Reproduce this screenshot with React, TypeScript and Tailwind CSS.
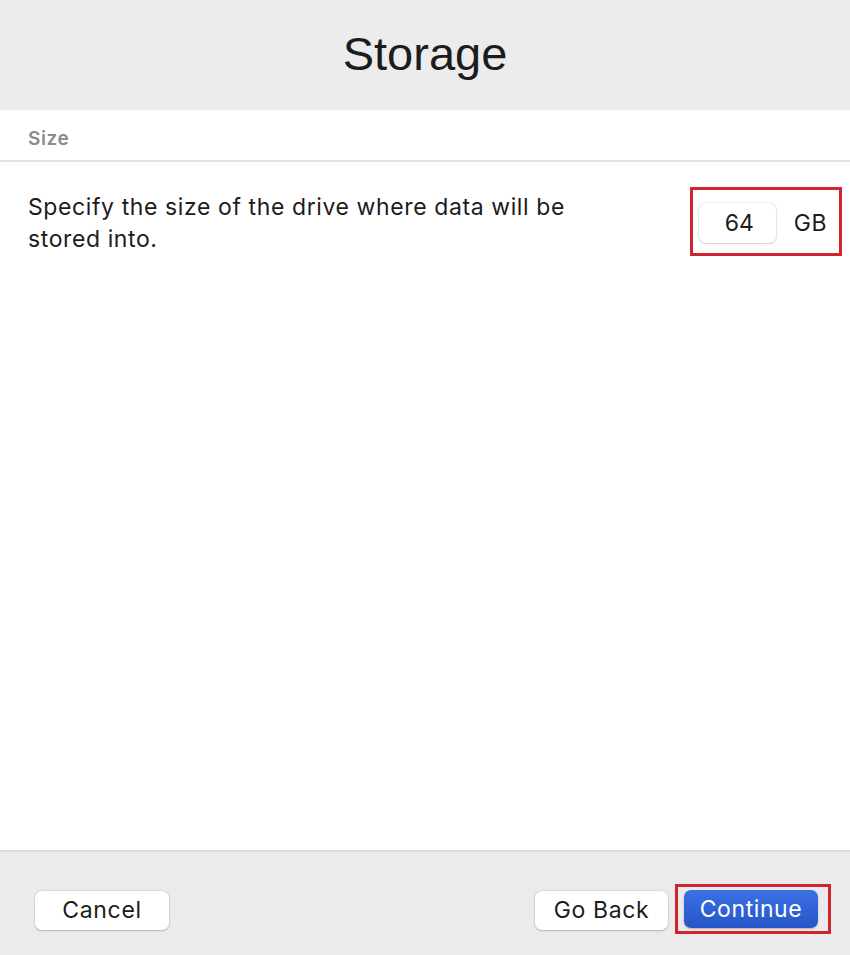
export default function App() {
  return (
    <main
      className="flex h-[955px] w-full flex-col bg-white text-[#1c1c1c]"
      style={{ fontFamily: 'Inter, "Liberation Sans", Arial, sans-serif' }}
    >
      <header className="flex h-[110px] items-center justify-center bg-[#ececec] pb-[4px]">
        <h1
          className="text-[47px] leading-none text-[#1c1c1c]"
          style={{ fontFamily: '"Liberation Sans", Arial, sans-serif' }}
        >
          Storage
        </h1>
      </header>

      <section className="flex flex-1 flex-col">
        <div className="flex h-[52px] items-center border-b-2 border-[#e3e3e3] pl-[28px] pt-[9px]">
          <span className="text-[19px] font-semibold tracking-[0.6px] text-[#8c8c8c]">Size</span>
        </div>

        <div className="flex items-start justify-between pl-[28px] pr-[8px] pt-[25px]">
          <p className="mt-[4px] w-[600px] text-[23px] leading-[32px] tracking-[0.6px]">
            Specify the size of the drive where data will be stored into.
          </p>
          <div className="flex items-center border-[3px] border-[#cf2530] pb-[10px] pl-[6px] pr-[12px] pt-[13px]">
            <div className="flex h-[40px] w-[77px] items-center justify-center rounded-[7px] bg-white pl-[4px] text-[23px] shadow-[0_0_0_1px_rgba(0,0,0,0.06),0_1px_2px_rgba(0,0,0,0.15)]">
              64
            </div>
            <span className="ml-[18px] text-[23px] tracking-[0.5px]">GB</span>
          </div>
        </div>
      </section>

      <footer className="flex h-[105px] items-start justify-between border-t-2 border-[#dadada] bg-[#ebebeb] pl-[35px] pr-[19px] pt-[32px]">
        <button className="mt-[7px] h-[39px] w-[134px] rounded-[7px] bg-white text-[23px] tracking-[0.7px] shadow-[0_0_0_1px_rgba(0,0,0,0.05),0_1px_2px_rgba(0,0,0,0.2)]">
          Cancel
        </button>
        <div className="flex items-start gap-[7px]">
          <button className="mt-[7px] h-[39px] w-[133px] rounded-[7px] bg-white text-[23px] tracking-[0.6px] shadow-[0_0_0_1px_rgba(0,0,0,0.05),0_1px_2px_rgba(0,0,0,0.2)]">
            Go Back
          </button>
          <div className="border-[3px] border-[#cf2530] py-[3px] pl-[6px] pr-[10px]">
            <button className="h-[38px] w-[134px] rounded-[7px] bg-gradient-to-b from-[#3b70e3] to-[#2556c9] text-[23px] tracking-[0.6px] text-white shadow-[0_1px_2px_rgba(0,0,0,0.25)]">
              Continue
            </button>
          </div>
        </div>
      </footer>
    </main>
  );
}
